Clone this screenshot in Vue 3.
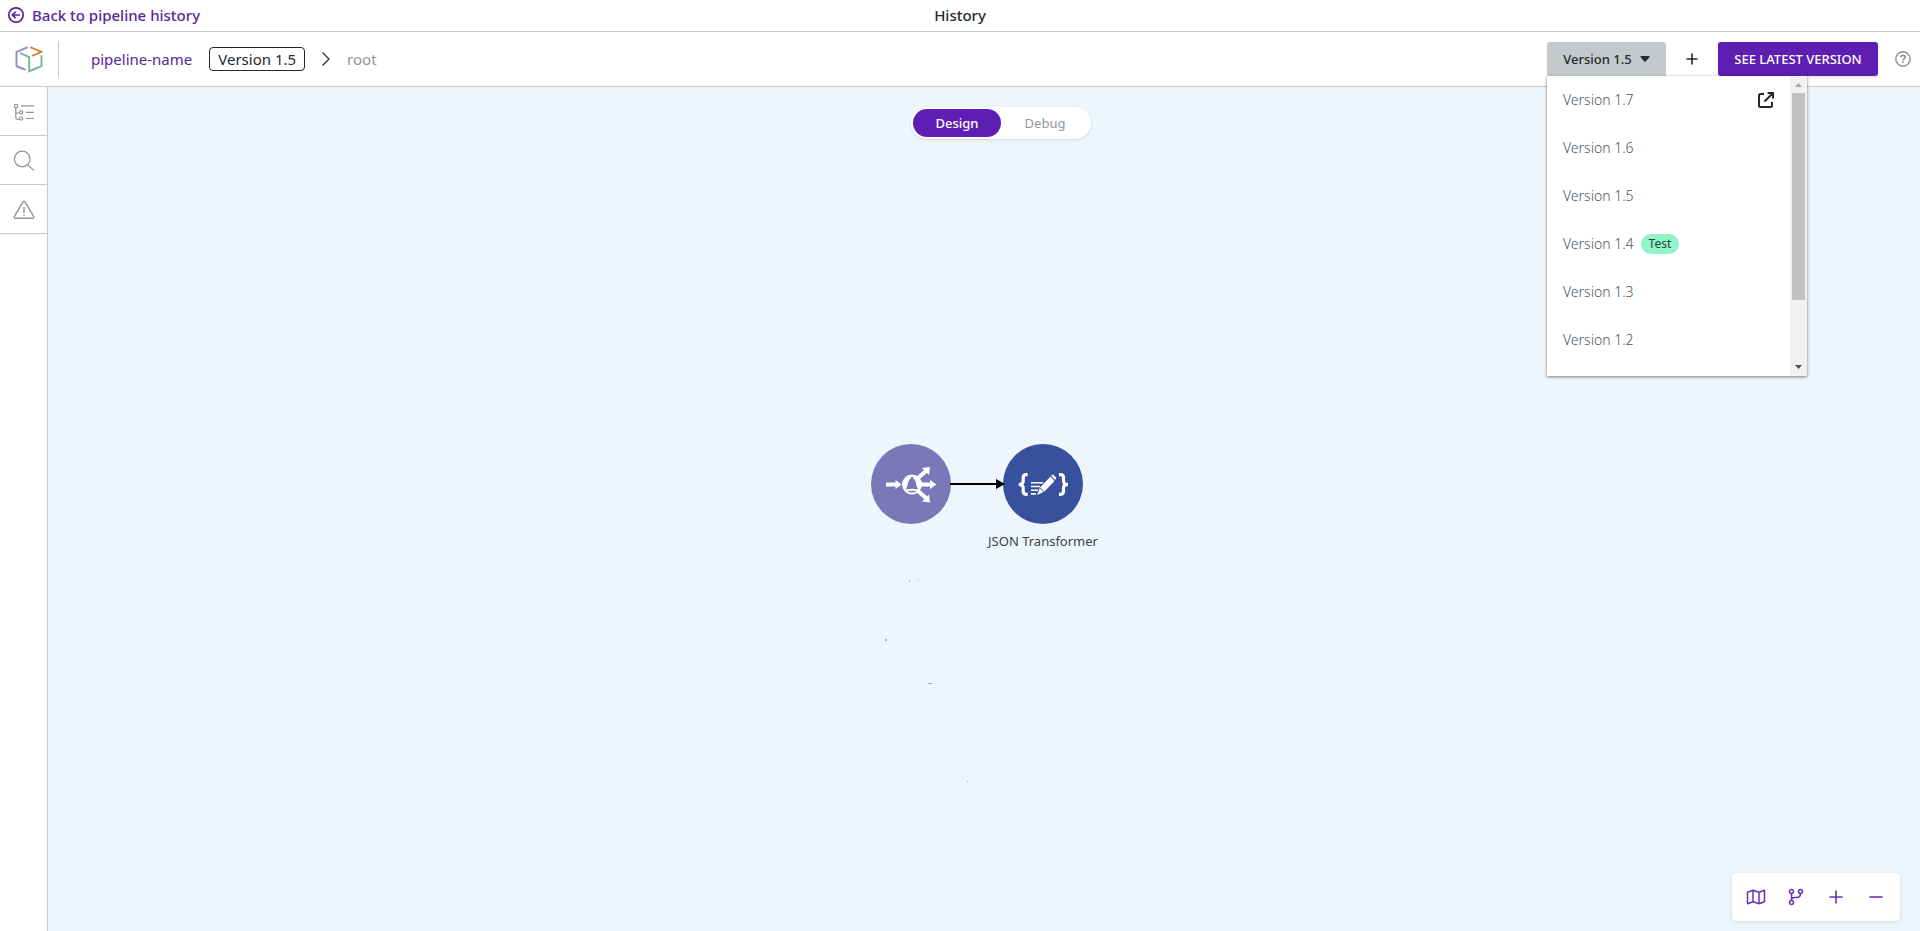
<script setup>
import { ref } from 'vue'

const versions = [
  { name: 'Version 1.7', external: true },
  { name: 'Version 1.6' },
  { name: 'Version 1.5' },
  { name: 'Version 1.4', tag: 'Test' },
  { name: 'Version 1.3' },
  { name: 'Version 1.2' }
]
const modes = ['Design', 'Debug']
const mode = ref('Design')
const menuOpen = ref(true)
</script>

<template>
  <div class="page">
    <div class="topbar">
      <a class="back" href="#">
        <svg width="18" height="18" viewBox="0 0 18 18" fill="none" stroke="currentColor" stroke-width="1.7">
          <circle cx="9" cy="9" r="7.2" />
          <path d="M13 9H5.6M8.6 5.8L5.4 9l3.2 3.2" />
        </svg>
        <span>Back to pipeline history</span>
      </a>
      <h1 class="title">History</h1>
    </div>

    <header class="header">
      <a class="logo" href="#" aria-label="Home">
        <svg width="28" height="28" viewBox="0 0 28 28" fill="none" stroke-width="2">
          <path d="M12.7 2.2L1.5 6.8v14.4l9 3.6" stroke="#9a8fc8" />
          <path d="M15.2 2.2l11.3 4.7-9.5 4" stroke="#e0852f" />
          <path d="M5 8.2l9.2 4v14l12.3-5V10.2" stroke="#74bd97" />
        </svg>
      </a>
      <nav class="crumbs">
        <a class="name" href="#">pipeline-name</a>
        <span class="version">Version 1.5</span>
        <svg class="chevron" width="10" height="16" viewBox="0 0 10 16" fill="none" stroke="#2b2f33" stroke-width="1.3">
          <path d="M1.5 1.5L8 8l-6.5 6.5" />
        </svg>
        <span class="root">root</span>
      </nav>
      <div class="actions">
        <div class="picker">
          <button class="picker-button" type="button" :aria-expanded="menuOpen" @click="menuOpen = !menuOpen">
            Version 1.5
            <svg width="10" height="6" viewBox="0 0 10 6" fill="currentColor">
              <path d="M1 0h8q1 0 .5 1L5.7 5.5q-.7.7-1.4 0L.5 1Q0 0 1 0z" />
            </svg>
          </button>
          <div v-if="menuOpen" class="menu">
            <ul class="list">
              <li v-for="v in versions" :key="v.name">
                <button class="item" type="button">
                  <span>{{ v.name }}</span>
                  <span v-if="v.tag" class="tag">{{ v.tag }}</span>
                  <svg v-if="v.external" class="external" width="18" height="18" viewBox="0 0 18 18" fill="none" stroke="#25282b" stroke-width="2">
                    <path d="M7 3H3.5Q2 3 2 4.500V14.500Q2 16 3.500 16h10q1.500 0 1.500-1.500V11M10.500 2H16v5.500M16 2L7.500 10.500" />
                  </svg>
                </button>
              </li>
            </ul>
            <div class="scrollbar">
              <svg width="17" height="17" viewBox="0 0 17 17" fill="#a3a3a3"><path d="M5 11l3.500-4 3.500 4z" /></svg>
              <div class="track"><div class="thumb"></div></div>
              <svg width="17" height="17" viewBox="0 0 17 17" fill="#505050"><path d="M5 6l3.500 4L12 6z" /></svg>
            </div>
          </div>
        </div>
        <button class="add" type="button" aria-label="Add">
          <svg width="12" height="12" viewBox="0 0 12 12" stroke="#25282b" stroke-width="1.600"><path d="M6 0.500v11M0.500 6h11" /></svg>
        </button>
        <button class="latest" type="button">SEE LATEST VERSION</button>
        <button class="help" type="button" aria-label="Help">
          <svg width="16" height="16" viewBox="0 0 16 16" fill="none" stroke="#8b9094" stroke-width="1.400">
            <circle cx="8" cy="8" r="7.200" />
            <path d="M5.800 6.300C5.800 3.700 10.200 3.700 10.200 6.300 10.200 7.800 8 7.800 8 9.400M8 10.600v1.500" stroke-width="1.600" />
          </svg>
        </button>
      </div>
    </header>

    <div class="body">
      <aside class="sidebar">
        <button type="button" aria-label="Structure">
          <svg width="22" height="22" viewBox="0 0 22 22" fill="none" stroke="#8f9598" stroke-width="1.200">
            <rect x="1.500" y="3.500" width="3" height="3" rx="0.500" />
            <path d="M2.800 6.500v10q0 1.800 1.800 1.800H6.500M2.800 12h3.700M8 4.900h13M13 11.300h8M13 17.500h8" />
            <rect x="6.600" y="9.800" width="3" height="3" rx="1" />
            <rect x="6.600" y="16" width="3" height="3" rx="1" />
          </svg>
        </button>
        <button type="button" aria-label="Search">
          <svg width="22" height="22" viewBox="0 0 22 22" fill="none" stroke="#8f9598" stroke-width="1.200">
            <circle cx="9.200" cy="9" r="7.800" />
            <path d="M14.800 14.700l6.200 6.200" />
          </svg>
        </button>
        <button type="button" aria-label="Problems">
          <svg width="22" height="22" viewBox="0 0 22 22" fill="none" stroke="#8f9598" stroke-width="1.400">
            <path d="M9.900 3.200q1.100-1.800 2.200 0l8.500 14.200q.8 1.800-1 1.800H2.400q-1.800 0-1-1.800z" />
            <path d="M11 8v6M11 15.500v1.500" />
          </svg>
        </button>
      </aside>

      <main class="canvas">
        <div class="mode-bar">
          <div class="modes">
            <button v-for="m in modes" :key="m" type="button" :class="['mode', { active: m === mode }]" @click="mode = m">{{ m }}</button>
          </div>
        </div>

        <svg class="marks" width="88" height="208" viewBox="0 0 88 208" fill="#a9afb8">
          <path d="M25 2h1v2h-1zM34 1h1v1h-1zM1 61h2v2H1zM44 105h4v1h-4zM83 203h1v1h-1z" />
        </svg>
        <svg class="link" width="56" height="12" viewBox="0 0 56 12">
          <path d="M0 6h50" stroke="#000" stroke-width="2" />
          <path d="M46 1l9 5-9 5z" />
        </svg>
        <div class="node trigger">
          <svg width="80" height="80" viewBox="0 0 80 80" fill="none">
            <circle cx="40" cy="40" r="40" fill="#7c78b8" />
            <g stroke="#fff" stroke-width="4">
              <path d="M15 40.500h11M47 34l8-7M50 40.500h10M47 47l8 7" />
            </g>
            <g fill="#fff">
              <path d="M24.500 36l6 4.500-6 4.500zM59 36l6.500 4.500L59 45zM51 24l8-1-1 8zM51 57.500l8 1-1-8z" />
              <circle cx="41" cy="40.500" r="10" />
            </g>
            <path d="M34.500 45.500c3-2.500 1.500-11 6.500-11.200 5 .2 3.500 8.700 6.500 11.200q-6.500-1.600-13 0zM36 47.500q5-1.300 10 0-5 2-10 0z" fill="#7c78b8" />
            <circle cx="41" cy="34" r="1.300" fill="#7c78b8" />
          </svg>
        </div>
        <div class="node transformer">
          <svg width="80" height="80" viewBox="0 0 80 80" fill="none">
            <circle cx="40" cy="40" r="40" fill="#37519f" />
            <path d="M24.700 30.700h-1.500q-3 0-3 3v3.300q0 3.500-4.500 3.500 4.500 0 4.500 3.500v3.300q0 3 3 3h1.500M56 30.700h1.500q3 0 3 3v3.300q0 3.500 4.500 3.500-4.500 0-4.500 3.500v3.300q0 3-3 3H56" stroke="#fff" stroke-width="3.200" />
            <path d="M28 38.800h12M28 42.500h9M28 46.200h7M28 49.900h5" stroke="#fff" stroke-width="1.600" />
            <path d="M47.500 32.500l4 4.500L41.500 47.500l-7.500 3.500 3-7.500zM48.300 31.700l1.200-1q.5-.4 1 0l2.500 2.800q.5.500 0 1l-1 1.500z" fill="#fff" />
            <path d="M36.500 43.500l5 4.500" stroke="#37519f" stroke-width="0.900" />
          </svg>
          <span class="label">JSON Transformer</span>
        </div>

        <div class="toolbar">
          <button type="button" aria-label="Map">
            <svg width="20" height="16" viewBox="0 0 20 16" fill="none" stroke="currentColor" stroke-width="1.500" stroke-linejoin="round">
              <path d="M1.500 3.200L7 1.300l6 2 5.500-2v11.500L13 14.700l-6-2-5.500 2zM7 1.300v11.400M13 3.300v11.400" />
            </svg>
          </button>
          <button type="button" aria-label="Branches">
            <svg width="16" height="18" viewBox="0 0 16 18" fill="none" stroke="currentColor" stroke-width="1.500">
              <circle cx="3.500" cy="3.500" r="2" /><circle cx="12.500" cy="3.500" r="2" /><circle cx="3.500" cy="14.500" r="2" />
              <path d="M3.500 5.500v7M12.500 5.500q0 4-4 4H6.500q-3 0-3 2.500" />
            </svg>
          </button>
          <button type="button" aria-label="Zoom in">
            <svg width="14" height="14" viewBox="0 0 14 14" stroke="currentColor" stroke-width="1.600"><path d="M7 0.500v13M0.500 7h13" /></svg>
          </button>
          <button type="button" aria-label="Zoom out">
            <svg width="14" height="14" viewBox="0 0 14 14" stroke="currentColor" stroke-width="1.600"><path d="M0.500 7h13" /></svg>
          </button>
        </div>
      </main>
    </div>
  </div>
</template>

<style>
body {
  margin: 0;
}
</style>

<style scoped>
.page {
  display: flex;
  flex-direction: column;
  min-height: 100vh;
  background: #fff;
  color: #25282b;
  font-family: "Noto Sans", sans-serif;
  font-size: 14px;
}
button {
  display: flex;
  align-items: center;
  justify-content: center;
  padding: 0;
  border: 0;
  background: none;
  color: inherit;
  font: inherit;
  cursor: pointer;
}
a {
  color: #57259c;
  text-decoration: none;
}
svg {
  display: block;
  flex: none;
}
.topbar {
  display: grid;
  grid-template-columns: 1fr auto 1fr;
  align-items: center;
  height: 30px;
  padding: 0 7px 1px;
  border-bottom: 1px solid #c4c9cb;
}
.back {
  display: flex;
  align-items: center;
  gap: 7px;
  font-size: 15px;
  font-weight: 500;
  line-height: 20px;
}
.title {
  margin: 0;
  font-size: 15px;
  font-weight: 500;
  line-height: 20px;
}
.header {
  display: flex;
  align-items: center;
  height: 54px;
  padding: 0 9px 0 0;
  border-bottom: 1px solid #c4c9cb;
}
.logo {
  display: flex;
  align-items: center;
  height: 36px;
  padding: 0 15px;
  border-right: 1px solid #c4c9cb;
}
.crumbs {
  display: flex;
  align-items: center;
  margin-left: 32px;
  font-size: 15px;
  line-height: 22px;
}
.version {
  margin-left: 17px;
  padding: 0 8px;
  border: 1px solid #25282b;
  border-radius: 4px;
}
.chevron {
  margin: 0 16px;
}
.root {
  color: #8f9598;
}
.actions {
  display: flex;
  align-items: center;
  margin-left: auto;
}
.picker {
  position: relative;
}
.picker-button {
  gap: 8px;
  min-width: 119px;
  height: 34px;
  border-radius: 3px 3px 0 0;
  background: #c4cacc;
  font-weight: 500;
  font-size: 13px;
}
.menu {
  position: absolute;
  z-index: 2;
  top: 100%;
  left: 0;
  display: flex;
  width: 260px;
  height: 300px;
  background: #fff;
  box-shadow: 0 1px 3px rgba(0, 0, 0, 0.5);
}
.list {
  flex: 1;
  margin: 0;
  padding: 0;
  overflow: hidden;
  list-style: none;
}
.item {
  justify-content: flex-start;
  gap: 7px;
  width: 100%;
  height: 48px;
  padding: 0 15px 1px 16px;
  color: #4d5357;
  font-weight: 300;
  line-height: 20px;
}
.tag {
  padding: 0 8px;
  border-radius: 10px;
  background: #92f5c8;
  color: #25453a;
  font-size: 12px;
  font-weight: 400;
}
.external {
  margin-left: auto;
}
.scrollbar {
  display: flex;
  flex-direction: column;
  width: 17px;
  background: #f1f1f1;
}
.track {
  flex: 1;
  padding: 0 2px;
}
.thumb {
  height: 78%;
  background: #c1c1c1;
}
.add {
  width: 52px;
  height: 34px;
}
.latest {
  min-width: 160px;
  height: 34px;
  border-radius: 3px;
  background: #5e1eb4;
  box-shadow: 0 1px 3px rgba(0, 0, 0, 0.15);
  color: #fff;
  font-size: 13px;
  font-weight: 500;
}
.help {
  margin-left: 17px;
}
.body {
  display: flex;
  flex: 1;
}
.sidebar {
  width: 47px;
  border-right: 1px solid #c4c9cb;
}
.sidebar button {
  width: 100%;
  height: 49px;
  padding-top: 2px;
  border-bottom: 1px solid #c4c9cb;
}
.canvas {
  position: relative;
  flex: 1;
  overflow: hidden;
  background: #edf5fd;
}
.mode-bar {
  display: flex;
  justify-content: center;
  padding: 20px 0 0 34px;
}
.modes {
  display: flex;
  padding: 2px;
  border-radius: 16px;
  background: #fff;
  box-shadow: 0 1px 3px rgba(0, 0, 0, 0.12);
}
.mode {
  width: 88px;
  height: 28px;
  border-radius: 14px;
  color: #8f9598;
  font-size: 13px;
}
.mode.active {
  background: #5e1eb4;
  color: #fff;
  font-weight: 500;
}
.marks {
  position: absolute;
  top: 491px;
  left: 836px;
}
.node {
  position: absolute;
  top: 357px;
  width: 80px;
}
.trigger {
  left: 823px;
}
.transformer {
  left: 955px;
}
.link {
  position: absolute;
  z-index: 1;
  top: 391px;
  left: 902px;
}
.label {
  display: flex;
  justify-content: center;
  margin-top: 7px;
  color: #3f4447;
  font-size: 13px;
  line-height: 20px;
  white-space: nowrap;
}
.toolbar {
  position: absolute;
  right: 20px;
  bottom: 10px;
  display: flex;
  padding: 4px;
  border-radius: 4px;
  background: #fff;
  box-shadow: 0 1px 4px rgba(0, 0, 0, 0.12);
  color: #6a31b5;
}
.toolbar button {
  width: 40px;
  height: 40px;
}
</style>
